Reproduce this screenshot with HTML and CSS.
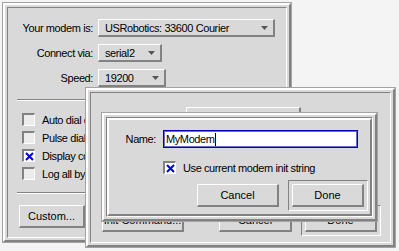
FILE: index.html
```html
<!DOCTYPE html>
<html lang="en">
<head>
  <meta charset="UTF-8">
  <title>Modem Settings</title>
  <link rel="stylesheet" href="styles.css">
</head>
<body>
  <div class="desk">
    <!-- main modem window -->
    <div class="win w1">
      <div class="deco">
        <div class="client">
          <div class="form">
            <span class="lbl">Your modem is:</span>
            <div class="opt o1"><span>USRobotics: 33600 Courier</span><svg width="7" height="4"><polygon points="0,0 7,0 3.5,4" fill="#555"/></svg></div>
            <span class="lbl">Connect via:</span>
            <div class="opt o2"><span>serial2</span><svg width="7" height="4"><polygon points="0,0 7,0 3.5,4" fill="#555"/></svg></div>
            <span class="lbl">Speed:</span>
            <div class="opt o3"><span>19200</span><svg width="7" height="4"><polygon points="0,0 7,0 3.5,4" fill="#555"/></svg></div>
          </div>
          <div class="sep"></div>
          <div class="checks">
            <div class="check"><span class="box"></span>Auto dial on startup</div>
            <div class="check"><span class="box"></span>Pulse dialing</div>
            <div class="check"><span class="box on"><svg width="9" height="9"><path d="M1 1L8 8M8 1L1 8" stroke="#0000e0" stroke-width="2"/></svg></span>Display connection status</div>
            <div class="check"><span class="box"></span>Log all bytes</div>
          </div>
          <div class="sep"></div>
          <div class="btns">
            <button class="btn b-custom">Custom...</button>
            <button class="btn">Cancel</button>
          </div>
        </div>
      </div>
    </div>

    <!-- new modem window -->
    <div class="win w2">
      <div class="deco">
        <div class="client c2">
          <button class="btn b-add">Add...</button>
          <div class="row2">
            <button class="btn b-init">Init Command...</button>
            <button class="btn b-cancel2">Cancel</button>
            <div class="ring r2"><button class="btn b-done2">Done</button></div>
          </div>
        </div>
      </div>
    </div>

    <!-- name dialog -->
    <div class="win w3">
      <div class="deco">
        <div class="client">
          <div class="panel">
            <div class="dlg">
              <span class="lbl">Name:</span>
              <div class="field">MyModem<span class="caret"></span></div>
              <span></span>
              <div class="check"><span class="box on"><svg width="9" height="9"><path d="M1 1L8 8M8 1L1 8" stroke="#0000e0" stroke-width="2"/></svg></span>Use current modem init string</div>
              <div class="row3">
                <button class="btn b-cancel3">Cancel</button>
                <div class="ring r3"><button class="btn b-done3">Done</button></div>
              </div>
            </div>
          </div>
        </div>
      </div>
    </div>
  </div>
</body>
</html>
```

FILE: styles.css
```css
body {
  margin: 0;
  background: #f4f4f4;
  font: 11px "Liberation Sans", Arial, sans-serif;
  letter-spacing: -0.4px;
  color: #000;
}
.desk {
  position: relative;
  width: 399px;
  height: 251px;
  overflow: hidden;
}
.win {
  position: absolute;
  box-sizing: border-box;
  background: #d9d9d9;
  border: 1px solid #a3a3a3;
}
.deco {
  height: 100%;
  box-sizing: border-box;
  border: 2px solid;
  border-color: #fff #828282 #828282 #fff;
  padding: 2px;
}
.client {
  height: 100%;
  box-sizing: border-box;
  border: 1px solid;
  border-color: #828282 #fff #fff #828282;
}
.w1 {
  left: 2px;
  top: 2px;
  width: 290px;
  height: 241px;
}
.w2 {
  left: 85px;
  top: 87px;
  width: 311px;
  height: 161px;
}
.w3 {
  left: 101px;
  top: 112px;
  width: 277px;
  height: 110px;
}

/* main window */
.form {
  display: grid;
  grid-template-columns: 85px auto;
  grid-auto-rows: 18px;
  column-gap: 5px;
  row-gap: 7px;
  align-items: center;
  justify-items: start;
  margin-top: 11px;
}
.lbl {
  justify-self: end;
}
.opt {
  height: 18px;
  box-sizing: border-box;
  display: flex;
  align-items: center;
  justify-content: space-between;
  padding: 0 5px 0 6px;
  border-style: solid;
  border-width: 1px 2px 2px 1px;
  border-color: #fff #828282 #828282 #fff;
}
.o1 { width: 177px; }
.o2 { width: 64px; }
.o3 { width: 68px; }
.sep {
  height: 0;
  margin: 12px 9px 0;
  border-top: 1px solid #828282;
  border-bottom: 1px solid #fff;
}
.checks {
  display: flex;
  flex-direction: column;
  gap: 5px;
  margin-top: 12px;
  padding-left: 14px;
  white-space: nowrap;
}
.check {
  display: flex;
  align-items: center;
  gap: 7px;
  height: 13px;
  white-space: nowrap;
}
.box {
  width: 13px;
  height: 13px;
  box-sizing: border-box;
  display: flex;
  align-items: center;
  justify-content: center;
  border-style: solid;
  border-width: 2px 1px 1px 2px;
  border-color: #828282 #fff #fff #828282;
  background: #ececec;
}
.box.on {
  background: #fff;
}
.btns {
  display: flex;
  gap: 20px;
  margin-top: 11px;
  padding-left: 11px;
}
.btn {
  height: 23px;
  box-sizing: border-box;
  padding: 0;
  border-style: solid;
  border-width: 1px 2px 2px 1px;
  border-color: #fff #828282 #828282 #fff;
  background: #d9d9d9;
  font: inherit;
  color: #000;
}
.b-custom { width: 66px; }
.ring {
  box-sizing: border-box;
  padding: 3px;
  border: 1px solid;
  border-color: #828282 #fff #fff #828282;
}

/* second window */
.c2 {
  display: flex;
  flex-direction: column;
  justify-content: space-between;
}
.b-add {
  width: 115px;
  margin: 14px 0 0 95px;
}
.row2 {
  display: flex;
  align-items: center;
  margin: 0 0 6px 11px;
}
.b-init { width: 82px; }
.b-cancel2 { width: 73px; margin: 0 9px 0 35px; }
.b-done2 { width: 72px; }

/* name dialog */
.panel {
  height: 100%;
  box-sizing: border-box;
  margin: 0;
  border: 2px solid;
  border-color: #fff #828282 #828282 #fff;
}
.dlg {
  display: grid;
  grid-template-columns: 47px 195px;
  column-gap: 7px;
  align-items: center;
  margin-top: 10px;
}
.field {
  height: 18px;
  box-sizing: border-box;
  display: flex;
  align-items: center;
  padding-left: 2px;
  border: 1px solid #0000b0;
  box-shadow: inset 0 0 0 1px #6a6ad0;
  background: #fff;
}
.caret {
  width: 1px;
  height: 13px;
  background: #000;
}
.dlg .check {
  margin-top: 13px;
}
.row3 {
  grid-column: 1 / 3;
  display: flex;
  align-items: center;
  justify-content: flex-end;
  gap: 9px;
  margin: 6px -10px 0 0;
}
.b-cancel3 { width: 82px; }
.b-done3 { width: 72px; }
```
